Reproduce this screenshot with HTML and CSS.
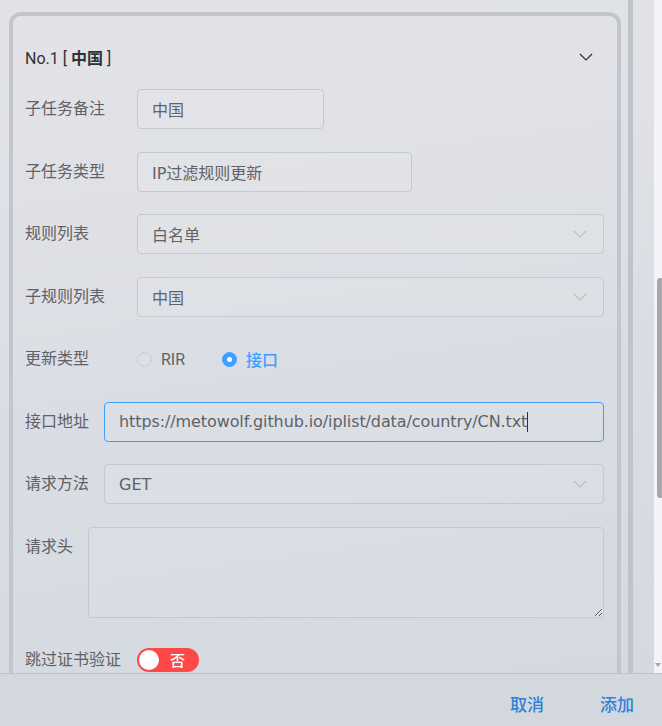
FILE: index.html
```html
<!DOCTYPE html>
<html lang="zh-CN">
<head>
<meta charset="utf-8">
<title>子任务</title>
<link rel="stylesheet" href="styles.css">
</head>
<body>
<div class="app">
  <div class="viewport">
    <div class="content">
      <div class="card">
        <div class="card-title">
          <span class="title-text">No.1 [ <b>中国</b> ]</span>
          <svg class="title-arrow" width="14" height="8" viewBox="0 0 14 8"><polyline points="1,1 7,7 13,1" fill="none" stroke="#303133" stroke-width="1.2"/></svg>
        </div>

        <div class="row">
          <div class="label">子任务备注</div>
          <div class="field w-sm">中国</div>
        </div>
        <div class="row">
          <div class="label">子任务类型</div>
          <div class="field w-md">IP过滤规则更新</div>
        </div>
        <div class="row">
          <div class="label">规则列表</div>
          <div class="field grow select">
            <span>白名单</span>
            <svg class="sel-arrow" width="14" height="8" viewBox="0 0 14 8"><polyline points="1,1 7,7 13,1" fill="none" stroke="#b9bdc5" stroke-width="1.1"/></svg>
          </div>
        </div>
        <div class="row">
          <div class="label">子规则列表</div>
          <div class="field grow select">
            <span>中国</span>
            <svg class="sel-arrow" width="14" height="8" viewBox="0 0 14 8"><polyline points="1,1 7,7 13,1" fill="none" stroke="#b9bdc5" stroke-width="1.1"/></svg>
          </div>
        </div>
        <div class="row">
          <div class="label">更新类型</div>
          <div class="radios">
            <span class="radio"><span class="radio-dot"></span><span class="radio-text">RIR</span></span>
            <span class="radio checked"><span class="radio-dot"></span><span class="radio-text">接口</span></span>
          </div>
        </div>
        <div class="row">
          <div class="label auto">接口地址</div>
          <div class="field grow focus"><span class="url">https://metowolf.github.io/iplist/data/country/CN.txt</span><span class="caret"></span></div>
        </div>
        <div class="row">
          <div class="label auto">请求方法</div>
          <div class="field grow select">
            <span>GET</span>
            <svg class="sel-arrow" width="14" height="8" viewBox="0 0 14 8"><polyline points="1,1 7,7 13,1" fill="none" stroke="#b9bdc5" stroke-width="1.1"/></svg>
          </div>
        </div>
        <div class="row">
          <div class="label auto">请求头</div>
          <textarea class="area"></textarea>
        </div>
        <div class="row">
          <div class="label">跳过证书验证</div>
          <div class="switch-wrap">
            <span class="switch"><span class="knob"></span><span class="switch-text">否</span></span>
          </div>
        </div>
      </div>
    </div>
    <div class="rail"></div>
    <div class="gap"></div>
    <div class="scrollbar">
      <div class="thumb"></div>
      <div class="sb-fill"></div>
      <div class="sb-arrow"></div>
    </div>
  </div>
  <div class="footer">
    <span class="btn">取消</span>
    <span class="btn">添加</span>
  </div>
</div>
</body>
</html>
```
FILE: styles.css
```css
html, body {
  margin: 0;
  padding: 0;
  overflow: hidden;
}
body {
  font-family: Roboto, "Noto Sans CJK SC", "Noto Sans", sans-serif;
  background: linear-gradient(172deg, #e3e3e7 0%, #e0e1e6 25%, #dadee4 50%, #d6dbe2 80%, #d4d9e0 100%);
  color: #606266;
}
.app {
  width: 662px;
  height: 726px;
  display: flex;
  flex-direction: column;
}
.viewport {
  height: 673px;
  flex: none;
  display: flex;
  overflow: hidden;
}
.content {
  flex: none;
  padding: 12px 0 0 9px;
}
.card {
  box-sizing: border-box;
  width: 612px;
  border: 4px solid #c1c5cc;
  border-radius: 12px;
  padding: 29px 13px 60px 12px;
}
.card-title {
  height: 24px;
  display: flex;
  align-items: center;
  justify-content: space-between;
  padding-right: 11px;
  margin-bottom: 20px;
  font-size: 16px;
  color: #303133;
}
.card-title b {
  font-weight: 700;
}
.title-arrow {
  display: block;
}
.row {
  display: flex;
  align-items: flex-start;
  margin-bottom: 22.5px;
}
.label {
  flex: none;
  width: 112px;
  line-height: 40px;
  height: 40px;
  font-size: 16px;
  color: #5f6166;
  white-space: nowrap;
}
.label.auto {
  width: auto;
  margin-right: 15px;
}
.field {
  box-sizing: border-box;
  height: 40px;
  border: 1px solid #c5c8ce;
  border-radius: 4px;
  padding: 0 14px;
  display: flex;
  align-items: center;
  font-family: "DejaVu Sans", "Noto Sans CJK SC", sans-serif;
  font-size: 16px;
  color: #606266;
  background: rgba(255, 255, 255, 0.07);
  white-space: nowrap;
}
.url {
  letter-spacing: -0.1px;
}
.w-sm { width: 187px; }
.w-md { width: 275px; }
.grow { flex: 1; }
.select {
  justify-content: space-between;
  padding-right: 16px;
}
.sel-arrow { display: block; }
.focus {
  border-color: #409eff;
}
.caret {
  display: inline-block;
  width: 1px;
  height: 20px;
  background: #303133;
}
.radios {
  height: 40px;
  display: flex;
  align-items: center;
}
.radio {
  display: flex;
  align-items: center;
  margin-right: 37px;
}
.radio-dot {
  box-sizing: border-box;
  width: 15px;
  height: 15px;
  border-radius: 50%;
  border: 1px solid #c6c9cf;
  background: rgba(255, 255, 255, 0.05);
  position: relative;
}
.radio-text {
  padding-left: 9px;
  font-size: 16px;
  color: #606266;
}
.radio.checked .radio-dot {
  border-color: #409eff;
  background: #409eff;
}
.radio.checked .radio-dot::after {
  content: "";
  position: absolute;
  left: 50%;
  top: 50%;
  width: 5px;
  height: 5px;
  margin: -2.5px 0 0 -2.5px;
  border-radius: 50%;
  background: #fff;
}
.radio.checked .radio-text {
  color: #409eff;
  font-weight: 500;
}
.area {
  flex: 1;
  box-sizing: border-box;
  height: 91px;
  border: 1px solid #c5c8ce;
  border-radius: 4px;
  background: rgba(255, 255, 255, 0.07);
  margin: 0;
  padding: 6px 14px;
  font-family: "DejaVu Sans", "Noto Sans CJK SC", sans-serif;
  font-size: 16px;
  resize: vertical;
  outline: none;
}
.switch-wrap {
  height: 40px;
  display: flex;
  align-items: flex-start;
  padding-top: 7.5px;
  box-sizing: border-box;
}
.switch {
  box-sizing: border-box;
  width: 62px;
  height: 24px;
  border-radius: 12px;
  background: #ff4949;
  display: flex;
  align-items: center;
  padding-left: 2px;
}
.knob {
  width: 20px;
  height: 20px;
  border-radius: 50%;
  background: #fff;
  flex: none;
}
.switch-text {
  margin-left: 11px;
  font-size: 15px;
  color: #fff;
  font-weight: 500;
}
.rail {
  flex: none;
  width: 5px;
  margin-left: 7px;
  background: #bfc3ca;
}
.gap {
  flex: none;
  width: 21px;
}
.scrollbar {
  flex: none;
  width: 8px;
  background: #f3f4f8;
  display: flex;
  flex-direction: column;
  align-items: flex-end;
}
.thumb {
  width: 5px;
  height: 220px;
  margin-top: 278px;
  background: #a8a9ad;
  border-radius: 3px 0 0 3px;
}
.sb-fill {
  flex: 1;
}
.sb-arrow {
  width: 0;
  height: 0;
  border-left: 3px solid transparent;
  border-right: 3px solid transparent;
  border-top: 4px solid #a3a4a8;
  margin: 0 1px 6px 0;
}
.footer {
  flex: none;
  height: 53px;
  box-sizing: border-box;
  border-top: 1px solid #c0c4cb;
  background: #d3d7de;
  display: flex;
  justify-content: flex-end;
  align-items: center;
  padding: 10px 28px 0 0;
  gap: 56px;
}
.btn {
  font-size: 17px;
  font-weight: 500;
  color: #2f81d8;
  line-height: 20px;
}
```
